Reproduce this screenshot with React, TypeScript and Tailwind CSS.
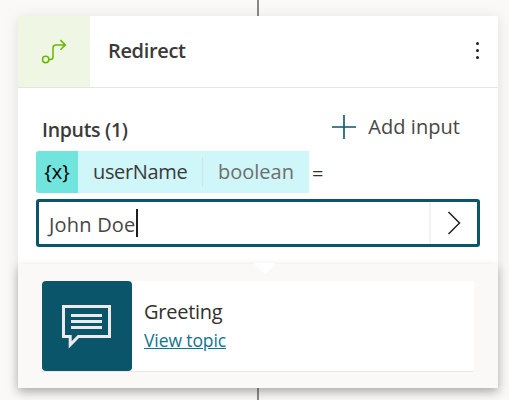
import React from "react";

function RedirectIcon() {
  return (
    <svg width="26" height="26" viewBox="0 0 26 26" fill="none" stroke="#6bb700" strokeWidth="1.5">
      <circle cx="4.7" cy="20.5" r="3.2" />
      <path d="M8 20.5h1.2a2.8 2.8 0 0 0 2.8-2.8V8.9a3 3 0 0 1 3-3h9.6M19.4 1.1 24.4 5.9l-5 4.8" />
    </svg>
  );
}

function CommentIcon() {
  return (
    <svg width="50" height="46" viewBox="0 0 50 46" fill="none" stroke="#edebe9">
      <path d="M1.5 1.5h46v30H16.4L8.2 39.8v-8.3H1.5z" strokeWidth="3" />
      <path d="M9 10.5h31M9 16.5h31M9 22.5h31" strokeWidth="3" />
    </svg>
  );
}

function Header() {
  return (
    <header className="flex h-[72px] shrink-0 border-b border-[#e5e5e5]">
      <div className="flex w-[72px] items-center justify-center bg-[#eff7e4]">
        <RedirectIcon />
      </div>
      <h1 className="ml-[18px] mt-[21px] text-[20px] leading-[28px] font-semibold tracking-[-0.35px] text-[#3b3a39]">Redirect</h1>
      <button aria-label="More" className="mr-[19px] mt-[26px] ml-auto flex h-[17px] flex-col justify-between">
        <span className="size-[3px] rounded-full bg-[#201f1e]" />
        <span className="size-[3px] rounded-full bg-[#201f1e]" />
        <span className="size-[3px] rounded-full bg-[#201f1e]" />
      </button>
    </header>
  );
}

function Inputs() {
  return (
    <section className="h-[176px] shrink-0 px-[18px] pt-[25px]">
      <div className="flex h-[38px] items-start">
        <h2 className="ml-[6px] mt-[4px] text-[19.5px] leading-[26px] font-semibold tracking-[-0.3px] text-[#3b3a39]">Inputs (1)</h2>
        <button className="mr-[20px] ml-auto flex text-[20px] leading-[28px] tracking-[0.05px] text-[#484644]">
          <svg width="24" height="24" className="mt-[2px] mr-[12px]" stroke="#0b556a" strokeWidth="1.6">
            <path d="M0 12h24M12 0v24" />
          </svg>
          Add input
        </button>
      </div>
      <div className="flex h-[42px] text-[20px] leading-[42px]">
        <div className="flex w-[273px] overflow-hidden rounded-l-[3px] bg-[#cff6f9]">
          <span className="w-[42px] bg-[#71e4de] text-center text-[20px] leading-[41px] text-black">{"{x}"}</span>
          <span className="w-[124px] pl-[15px] tracking-[-0.35px] text-[#3b3a39]">userName</span>
          <span className="my-[6px] w-px bg-[#d8dfe0]" />
          <span className="pl-[15px] leading-[42px] text-[#706e6c]">boolean</span>
        </div>
        <span className="ml-[3px] leading-[45px]">=</span>
      </div>
      <div className="mt-[6px] flex h-[48px] w-[444px] rounded-[3px] border-3 border-[#0b556a]">
        <span className="pl-[10px] text-[20px] leading-[46px] tracking-[0.2px] text-[#484644]">John Doe</span>
        <span className="mt-[7px] h-[28px] w-[2px] bg-[#201f1e]" />
        <div className="ml-auto flex w-[48px] items-center justify-center border-l-2 border-[#f3f2f1]">
          <svg width="14" height="24" fill="none" stroke="#201f1e" strokeWidth="1.5">
            <path d="M1.5 1 12.5 12 1.5 23" />
          </svg>
        </div>
      </div>
    </section>
  );
}

function Topic() {
  return (
    <section className="relative flex-1 bg-[#faf9f8] px-[24px] pt-[17px] shadow-[0_4px_9px_rgba(0,0,0,0.25)]">
      <svg width="20" height="11" className="absolute left-[237px] top-[-1px]" fill="#fff">
        <path d="M0 0h20v2L10 11 0 2z" />
      </svg>
      <div className="flex h-[90px] bg-white shadow-[0_1px_0_#e8e8e8]">
        <div className="w-[90px] rounded-[4px] bg-[#0b556a] pt-[24px] pl-[20px]">
          <CommentIcon />
        </div>
        <div className="ml-[12px] pt-[17px]">
          <div className="text-[20px] leading-[28px] tracking-[-0.25px]">Greeting</div>
          <a className="block text-[17.5px] leading-[29px] tracking-[-0.1px] text-[#0f7490] underline">View topic</a>
        </div>
      </div>
    </section>
  );
}

export default function App() {
  return (
    <div className="flex h-[400px] w-[509px] flex-col items-center overflow-hidden bg-[#faf9f8] pl-[7px] font-['Open_Sans','Noto_Sans',sans-serif] text-[#323130]">
      <div className="h-[16px] w-[2px] shrink-0 bg-[#8a8886]" />
      <main className="flex h-[372px] w-[480px] shrink-0 flex-col bg-white shadow-[0_2px_14px_rgba(0,0,0,0.10)]">
        <Header />
        <Inputs />
        <Topic />
      </main>
      <div className="h-[12px] w-[2px] shrink-0 bg-[#8a8886]" />
    </div>
  );
}
